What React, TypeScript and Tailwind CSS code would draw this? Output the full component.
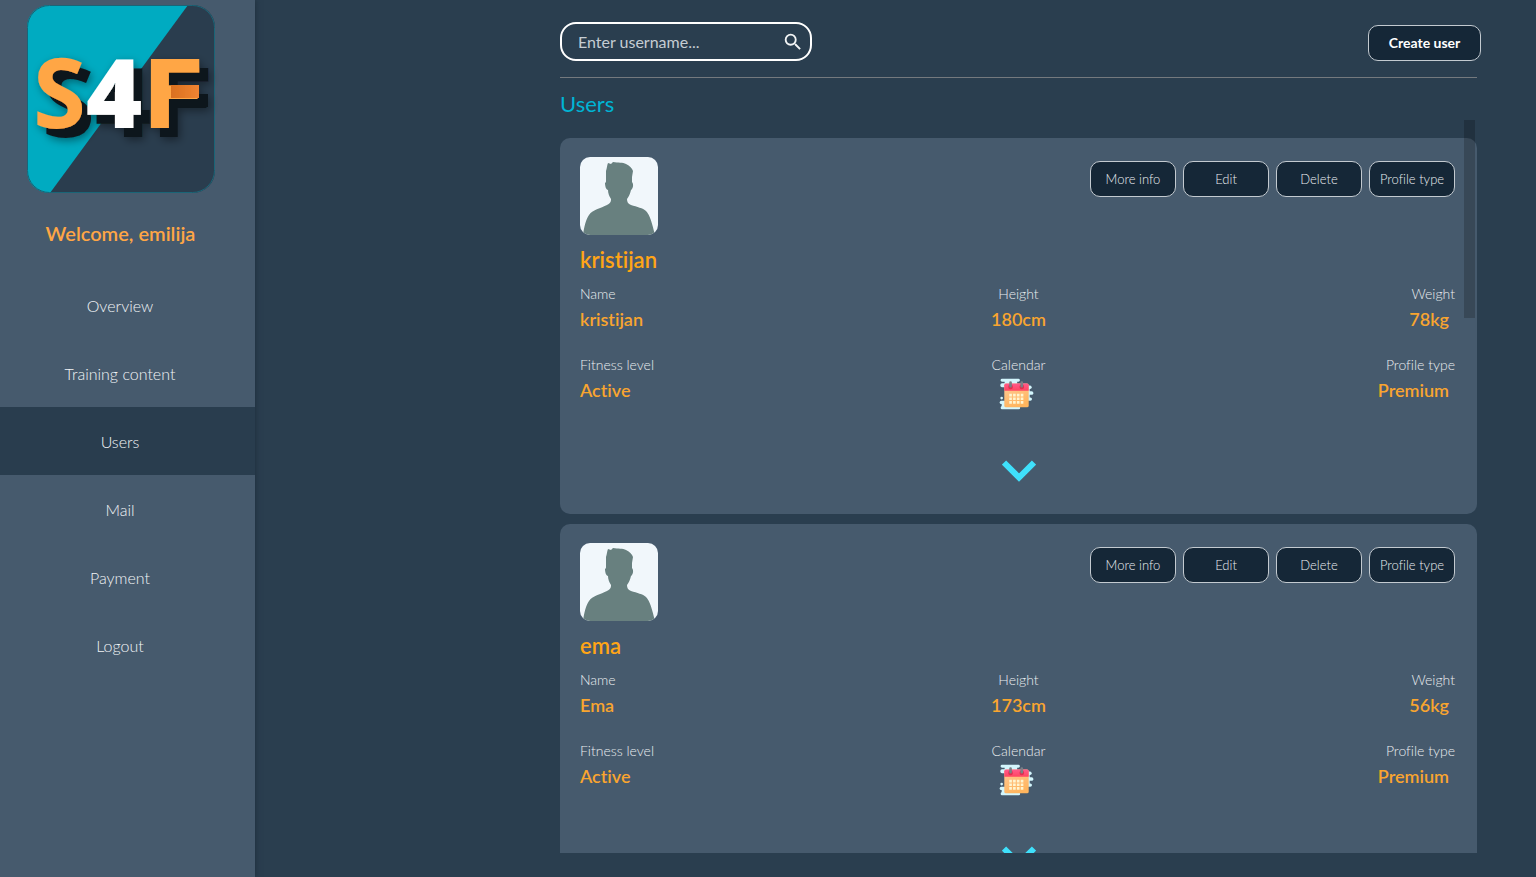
import { ReactNode, useState } from "react";
import { MdSearch } from "react-icons/md";

interface User {
  username: string;
  name: string;
  height: string;
  weight: string;
  fitnessLevel: string;
  profileType: string;
}

const users: User[] = [
  {
    username: "kristijan",
    name: "kristijan",
    height: "180cm",
    weight: "78kg",
    fitnessLevel: "Active",
    profileType: "Premium",
  },
  {
    username: "ema",
    name: "Ema",
    height: "173cm",
    weight: "56kg",
    fitnessLevel: "Active",
    profileType: "Premium",
  },
];

const links = [
  "Overview",
  "Training content",
  "Users",
  "Mail",
  "Payment",
  "Logout",
];

const actions = ["More info", "Edit", "Delete", "Profile type"];

const Logo = () => (
  <svg viewBox="0 0 188 188" className="w-[188px] h-[188px] overflow-visible">
    <defs>
      <clipPath id="logo-box">
        <rect width="188" height="188" rx="22" />
      </clipPath>
      <filter id="logo-shadow" x="-20%" y="-20%" width="150%" height="150%">
        <feDropShadow dx="9" dy="9" stdDeviation="0" floodColor="#0c161b" />
        <feDropShadow dx="2" dy="3" stdDeviation="4" floodOpacity="0.4" />
      </filter>
      <linearGradient id="logo-arm">
        <stop offset="0" stopColor="#d9701f" />
        <stop offset="1" stopColor="#f08432" />
      </linearGradient>
    </defs>
    <g clipPath="url(#logo-box)">
      <rect width="188" height="188" fill="#2a3d4e" />
      <path d="M0 0H161L23 188H0Z" fill="#00abc1" />
    </g>
    <rect
      x="0.5"
      y="0.5"
      width="187"
      height="187"
      rx="22"
      fill="none"
      stroke="#1a6577"
      strokeWidth="1"
    />
    <g filter="url(#logo-shadow)">
      <text
        x="6"
        y="123"
        fill="#ffa645"
        fontFamily="'Noto Sans', sans-serif"
        fontWeight="700"
        fontSize="96"
      >
        S
        <tspan fill="#ffffff" fontWeight="900">
          4
        </tspan>
        <tspan fontFamily="'DejaVu Sans', sans-serif" fontSize="95">
          F
        </tspan>
      </text>
      <rect x="144" y="80" width="28" height="13" fill="url(#logo-arm)" />
    </g>
  </svg>
);

const Avatar = () => (
  <svg viewBox="0 0 78 78" className="w-[78px] h-[78px] rounded-[10px]">
    <rect width="78" height="78" fill="#f1f7fb" />
    <path
      d="M3 78C4 70 6 62 9 58C12 53 21 51 27 48C31 46 31 44 31 42C29 39 28 36 28 33C26 33 25 29 25 26C26 25 26 25 26 24L26 14C27 11 27 8 28 6L31 7L33 5C38 6 43 5 46 7C50 9 52 11 53 14L52 20V25C54 27 53 32 51 33C50 37 49 39 47 42C47 45 48 47 51 48C57 50 63 51 66 54C70 58 72 66 75 78Z"
      fill="#68807f"
    />
  </svg>
);

const CalendarIcon = () => (
  <svg viewBox="0 0 104 97" className="w-[35px] h-8">
    <defs>
      <linearGradient id="cal-body" x1="0" y1="0" x2="0.4" y2="1">
        <stop offset="0" stopColor="#ffcb9a" />
        <stop offset="1" stopColor="#ffb55e" />
      </linearGradient>
      <linearGradient id="cal-head" x1="0" y1="0" x2="0" y2="1">
        <stop offset="0" stopColor="#ff5a8c" />
        <stop offset="1" stopColor="#ff4560" />
      </linearGradient>
    </defs>
    <g fill="#d3f6fd">
      <rect x="4" y="2" width="58" height="9" rx="4" />
      <rect x="16" y="9" width="38" height="12" />
      <rect x="3" y="16" width="28" height="12" rx="5" />
      <rect x="80" y="23" width="18" height="10" rx="5" />
      <rect x="80" y="30" width="12" height="34" />
      <rect x="80" y="40" width="23" height="11" rx="5" />
      <rect x="80" y="59" width="19" height="10" rx="5" />
      <circle cx="7" cy="61" r="4" />
      <rect x="1" y="69" width="20" height="10" rx="5" />
      <rect x="7" y="76" width="14" height="14" />
      <rect x="4" y="86" width="59" height="9" rx="4" />
    </g>
    <rect x="15" y="17" width="74" height="72" rx="5" fill="url(#cal-body)" />
    <path d="M15 39V22Q15 17 20 17H84Q89 17 89 22V39Z" fill="url(#cal-head)" />
    <circle cx="34" cy="27" r="7" fill="#e0304f" />
    <circle cx="68" cy="27" r="7" fill="#e0304f" />
    <path
      d="M34 14V25M68 14V25"
      stroke="#7c7f86"
      strokeWidth="8"
      strokeLinecap="round"
    />
    <path
      d="M30 52H73M30 63H73M30 74H73"
      stroke="#fff5d0"
      strokeWidth="8"
      strokeDasharray="8 3.6"
    />
  </svg>
);

const Chevron = () => (
  <svg viewBox="0 0 34 22" className="w-[34px] h-[22px]">
    <path d="M2 2.5L17 17.5L32 2.5" fill="none" stroke="#3fe0fb" strokeWidth="6" />
  </svg>
);

interface FieldProps {
  label: string;
  className: string;
  children: ReactNode;
}

const Field: React.FC<FieldProps> = ({ label, className, children }) => (
  <div className={`flex flex-col ${className}`}>
    <dt className="text-sm leading-5 font-light text-[#e9edf0]">{label}</dt>
    <dd className="text-lg leading-[30px] font-semibold text-[#f9a52f]">
      {children}
    </dd>
  </div>
);

const UserCard: React.FC<{ user: User }> = ({ user }) => (
  <article className="shrink-0 rounded-[10px] bg-[#465a6d] px-5 pt-[19px] pb-8">
    <div className="flex items-start justify-between">
      <Avatar />
      <div className="flex gap-[7px] pt-1 pr-0.5">
        {actions.map((action) => (
          <button
            key={action}
            className="w-[86px] h-9 rounded-[10px] border border-[#c3cad0] bg-[#152737] pt-px text-[13px] font-light text-[#e9edf0]"
          >
            {action}
          </button>
        ))}
      </div>
    </div>
    <h2 className="mt-[9px] text-[22px] leading-8 font-semibold text-[#ffa516]">
      {user.username}
    </h2>
    <dl className="mt-2 grid grid-cols-3 gap-y-[21px]">
      <Field label="Name" className="items-start">
        {user.name}
      </Field>
      <Field label="Height" className="items-center">
        {user.height}
      </Field>
      <Field label="Weight" className="items-end pr-0.5">
        <span className="pr-1.5">{user.weight}</span>
      </Field>
      <Field label="Fitness level" className="items-start">
        {user.fitnessLevel}
      </Field>
      <Field label="Calendar" className="items-center">
        <button aria-label="Open calendar" className="mt-[3px] mr-1 block">
          <CalendarIcon />
        </button>
      </Field>
      <Field label="Profile type" className="items-end pr-0.5">
        <span className="pr-1.5">{user.profileType}</span>
      </Field>
    </dl>
    <button aria-label="Show more" className="mx-auto mt-[50px] block">
      <Chevron />
    </button>
  </article>
);

const Sidebar = () => {
  const [active, setActive] = useState("Users");

  return (
    <aside className="w-[255px] shrink-0 bg-[#465a6d] pt-[5px] shadow-[0_0_6px_#1d2d3a]">
      <div className="flex flex-col items-center pr-[14px]">
        <Logo />
        <p className="mt-6 text-xl leading-8 font-semibold text-[#ffa645]">
          Welcome, emilija
        </p>
      </div>
      <nav className="mt-[22px] flex flex-col">
        {links.map((link) => (
          <a
            key={link}
            href="#"
            onClick={() => setActive(link)}
            className={`flex h-[68px] items-center justify-center pt-0.5 pr-[15px] text-base font-light text-[#f1f4f6] ${
              active === link ? "bg-[#293d4e]" : ""
            }`}
          >
            {link}
          </a>
        ))}
      </nav>
    </aside>
  );
};

const App = () => {
  const [search, setSearch] = useState("");

  return (
    <div className="flex h-screen overflow-hidden bg-[#2a3e4f] font-[Lato,sans-serif] [font-variant-ligatures:none]">
      <Sidebar />
      <main className="flex min-w-0 flex-1 flex-col pt-[22px] pr-[59px] pb-6 pl-[305px]">
        <header className="flex items-end justify-between border-b border-[#74797e] pb-4">
          <label className="flex h-[39px] w-[252px] items-center rounded-2xl border-2 border-white pr-1.5 pl-4">
            <input
              type="text"
              aria-label="Search users"
              placeholder="Enter username..."
              value={search}
              onChange={(e) => setSearch(e.target.value)}
              className="min-w-0 flex-1 bg-transparent text-base text-white outline-none placeholder:text-[#c5cdd3]"
            />
            <MdSearch className="h-[22px] w-[22px] text-[#f3f5f6]" />
          </label>
          <button className="-mr-1 h-9 w-[113px] rounded-[10px] border border-[#c3cad0] bg-[#152737] text-sm font-bold text-white">
            Create user
          </button>
        </header>
        <h1 className="pt-[10px] text-[22px] leading-8 text-[#00b4d4]">Users</h1>
        <div className="relative min-h-0 flex-1">
          <section className="flex h-full flex-col gap-[10px] overflow-hidden pt-[18px]">
            {users
              .filter((user) => user.username.includes(search))
              .map((user) => (
                <UserCard key={user.username} user={user} />
              ))}
          </section>
          {/* scroll thumb */}
          <div className="absolute top-0 right-0.5 h-[198px] w-[11px] bg-black/20" />
        </div>
      </main>
    </div>
  );
};

export default App;
